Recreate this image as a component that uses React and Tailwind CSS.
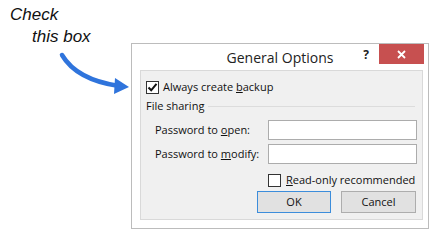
import React from "react";

function Check() {
  return (
    <svg width="11" height="11" viewBox="0 0 11 11" className="block">
      <path d="M1.5 5.5 L4.2 8.3 L9.5 1.8" fill="none" stroke="#111" strokeWidth="2" />
    </svg>
  );
}

export default function App() {
  const ui = { fontFamily: '"Open Sans", "Noto Sans", sans-serif' };
  return (
    <div className="relative w-[431px] h-[231px] bg-white overflow-hidden">
      {/* annotation */}
      <div
        className="absolute left-[10px] top-[5px] italic text-[17px] leading-[20px] text-[#111]"
        style={{ fontFamily: '"Liberation Sans", Arial, sans-serif' }}
      >
        <div>Check</div>
        <div className="ml-[22px] mt-[2px]">this box</div>
      </div>
      <svg className="absolute left-0 top-0" width="140" height="100" viewBox="0 0 140 100">
        <path d="M62 55 C 72 72, 92 82, 119 86" fill="none" stroke="#2f74dc" strokeWidth="4.5" strokeLinecap="round" />
        <polygon points="129,87 115,78 114,94" fill="#2f74dc" />
      </svg>

      {/* dialog */}
      <div
        className="absolute left-[131px] top-[43px] w-[298px] h-[186px] bg-white border border-[#bcbcbc] flex flex-col"
        style={ui}
      >
        <div className="grid grid-cols-[1fr_auto_1fr] h-[26px]">
          <div />
          <div className="text-[14px] leading-[26px] text-[#222] pt-[1px]">General Options</div>
          <div className="flex justify-end items-start pr-[4px]">
            <div className="text-[12px] font-bold leading-[20px] text-[#222] mr-[10px] mt-[1px]">?</div>
            <div className="w-[45px] h-[20px] bg-[#c75050] flex items-center justify-center">
              <svg width="9" height="9" viewBox="0 0 9 9">
                <path d="M1 1 L8 8 M8 1 L1 8" stroke="#fff" strokeWidth="1.8" />
              </svg>
            </div>
          </div>
        </div>
        <div className="ml-[8px] mr-[5px] h-[150px] bg-[#f0f0f0] border border-[#d9d9d9] flex flex-col text-[11px] text-[#111] pt-[7px] pl-[5px] pr-[5px] whitespace-nowrap">
          <div className="flex items-center h-[18px]">
            <div className="w-[13px] h-[13px] border border-[#333] bg-white flex items-center justify-center">
              <Check />
            </div>
            <span className="ml-[4px]">
              Always create <span className="underline">b</span>ackup
            </span>
          </div>
          <div className="flex items-center h-[16px] mt-[2px]">
            <span>File sharing</span>
            <div className="flex-1 h-px bg-[#dcdcdc] ml-[4px] mr-[2px]" />
          </div>
          <div className="grid grid-cols-[113px_149px] gap-y-[4px] mt-[6px] pl-[9px]">
            <div className="flex items-center h-[20px]">
              <span>
                Password to <span className="underline">o</span>pen:
              </span>
            </div>
            <div className="h-[20px] bg-white border border-[#acacac]" />
            <div className="flex items-center h-[20px]">
              <span>
                Password to <span className="underline">m</span>odify:
              </span>
            </div>
            <div className="h-[20px] bg-white border border-[#acacac]" />
          </div>
          <div className="flex items-center h-[16px] mt-[8px] pl-[122px]">
            <div className="w-[13px] h-[13px] border border-[#333] bg-white" />
            <span className="ml-[5px]">
              <span className="underline">R</span>ead-only recommended
            </span>
          </div>
          <div className="flex justify-end gap-[10px] mt-[3px] pr-[1px]">
            <div className="w-[74px] h-[22px] bg-[#e1e1e1] border border-[#3c8ddb] flex items-center justify-center">
              OK
            </div>
            <div className="w-[75px] h-[22px] bg-[#e1e1e1] border border-[#adadad] flex items-center justify-center">
              Cancel
            </div>
          </div>
        </div>
      </div>
    </div>
  );
}
